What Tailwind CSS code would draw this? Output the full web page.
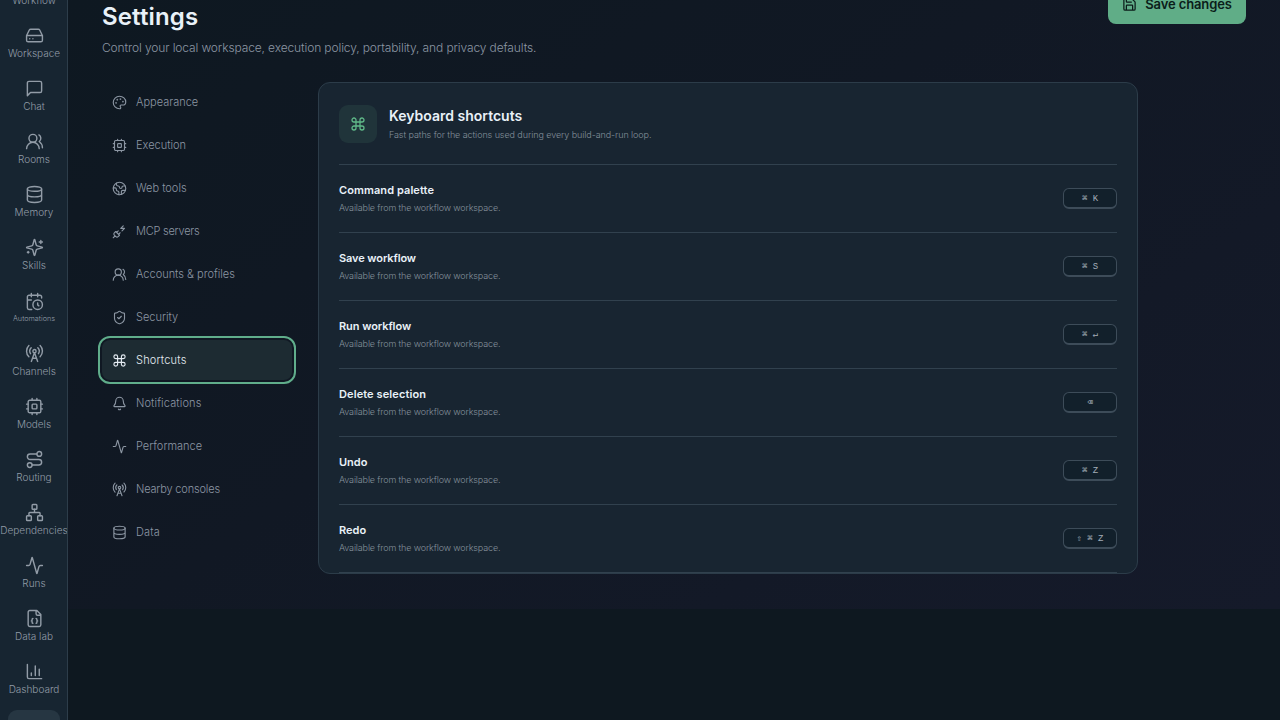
<!DOCTYPE html>
<html lang="en">
<head>
<meta charset="utf-8">
<title>Settings</title>
<script src="https://cdn.jsdelivr.net/npm/@tailwindcss/browser@4"></script>
</head>
<body class="h-[720px] w-[1280px] overflow-hidden bg-[#0e1820] font-['Inter',sans-serif] font-light text-[#8c96a3]">
<svg class="hidden" xmlns="http://www.w3.org/2000/svg">
<symbol id="drive" viewBox="0 0 24 24"><path d="M22 12H2M5.45 5.11 2 12v6a2 2 0 0 0 2 2h16a2 2 0 0 0 2-2v-6l-3.45-6.89A2 2 0 0 0 16.76 4H7.24a2 2 0 0 0-1.79 1.11zM6 16h.01M10 16h.01"/></symbol>
<symbol id="chat" viewBox="0 0 24 24"><path d="M21 15a2 2 0 0 1-2 2H7l-4 4V5a2 2 0 0 1 2-2h14a2 2 0 0 1 2 2z"/></symbol>
<symbol id="users" viewBox="0 0 24 24"><path d="M18 21a8 8 0 0 0-16 0"/><circle cx="10" cy="8" r="5"/><path d="M22 20c0-3.37-2-6.5-4-8a5 5 0 0 0-.45-8.3"/></symbol>
<symbol id="database" viewBox="0 0 24 24"><ellipse cx="12" cy="5" rx="9" ry="3"/><path d="M3 5V19A9 3 0 0 0 21 19V5M3 12A9 3 0 0 0 21 12"/></symbol>
<symbol id="sparkles" viewBox="0 0 24 24"><path d="M9.937 15.5A2 2 0 0 0 8.5 14.063l-6.135-1.582a.5.5 0 0 1 0-.962L8.5 9.936A2 2 0 0 0 9.937 8.5l1.582-6.135a.5.5 0 0 1 .963 0L14.063 8.5A2 2 0 0 0 15.5 9.937l6.135 1.581a.5.5 0 0 1 0 .964L15.5 14.063a2 2 0 0 0-1.437 1.437l-1.582 6.135a.5.5 0 0 1-.963 0zM20 3v4M22 5h-4M4 17v2M5 18H3"/></symbol>
<symbol id="calendar" viewBox="0 0 24 24"><path d="M21 7.5V6a2 2 0 0 0-2-2H5a2 2 0 0 0-2 2v14a2 2 0 0 0 2 2h3.5M16 2v4M8 2v4M3 10h5M17.5 17.5 16 16.3V14"/><circle cx="16" cy="16" r="6"/></symbol>
<symbol id="tower" viewBox="0 0 24 24"><path d="M4.9 16.1C1 12.2 1 5.8 4.9 1.9M7.8 4.7a6.14 6.14 0 0 0-.8 7.5"/><circle cx="12" cy="9" r="2"/><path d="M16.2 4.8c2 2 2.26 5.11.8 7.47M19.1 1.9a9.96 9.96 0 0 1 0 14.1M9.5 18h5M8 22l4-11 4 11"/></symbol>
<symbol id="cpu" viewBox="0 0 24 24"><rect x="4" y="4" width="16" height="16" rx="2"/><rect x="9" y="9" width="6" height="6" rx="1"/><path d="M15 2v2M15 20v2M2 15h2M2 9h2M20 15h2M20 9h2M9 2v2M9 20v2"/></symbol>
<symbol id="route" viewBox="0 0 24 24"><circle cx="6" cy="19" r="3"/><path d="M9 19h8.5a3.5 3.5 0 0 0 0-7h-11a3.5 3.5 0 0 1 0-7H15"/><circle cx="18" cy="5" r="3"/></symbol>
<symbol id="network" viewBox="0 0 24 24"><rect x="16" y="16" width="6" height="6" rx="1"/><rect x="2" y="16" width="6" height="6" rx="1"/><rect x="9" y="2" width="6" height="6" rx="1"/><path d="M5 16v-3a1 1 0 0 1 1-1h12a1 1 0 0 1 1 1v3M12 12V8"/></symbol>
<symbol id="activity" viewBox="0 0 24 24"><path d="M22 12h-2.48a2 2 0 0 0-1.93 1.46l-2.35 8.36a.25.25 0 0 1-.48 0L9.24 2.18a.25.25 0 0 0-.48 0l-2.35 8.36A2 2 0 0 1 4.49 12H2"/></symbol>
<symbol id="json" viewBox="0 0 24 24"><path d="M15 2H6a2 2 0 0 0-2 2v16a2 2 0 0 0 2 2h12a2 2 0 0 0 2-2V7ZM14 2v4a2 2 0 0 0 2 2h4M10 12a1 1 0 0 0-1 1v1a1 1 0 0 1-1 1 1 1 0 0 1 1 1v1a1 1 0 0 0 1 1M14 18a1 1 0 0 0 1-1v-1a1 1 0 0 1 1-1 1 1 0 0 1-1-1v-1a1 1 0 0 0-1-1"/></symbol>
<symbol id="chart" viewBox="0 0 24 24"><path d="M3 3v16a2 2 0 0 0 2 2h16M18 17V9M13 17V5M8 17v-3"/></symbol>
<symbol id="palette" viewBox="0 0 24 24"><path d="M12 22a1 1 0 0 1 0-20 10 9 0 0 1 10 9 5 5 0 0 1-5 5h-2.25a1.75 1.75 0 0 0-1.4 2.8l.3.4a1.75 1.75 0 0 1-1.4 2.8z"/><g fill="currentColor"><circle cx="13.5" cy="6.5" r=".5"/><circle cx="17.5" cy="10.5" r=".5"/><circle cx="6.5" cy="12.5" r=".5"/><circle cx="8.5" cy="7.5" r=".5"/></g></symbol>
<symbol id="earth" viewBox="0 0 24 24"><path d="M21.54 15H17a2 2 0 0 0-2 2v4.54M7 3.34V5a3 3 0 0 0 3 3 2 2 0 0 1 2 2c0 1.1.9 2 2 2a2 2 0 0 0 2-2c0-1.1.9-2 2-2h3.17M11 21.95V18a2 2 0 0 0-2-2 2 2 0 0 1-2-2v-1a2 2 0 0 0-2-2H2.05"/><circle cx="12" cy="12" r="10"/></symbol>
<symbol id="plug" viewBox="0 0 24 24"><path d="M6.3 20.3a2.4 2.4 0 0 0 3.4 0L12 18l-6-6-2.3 2.3a2.4 2.4 0 0 0 0 3.4ZM2 22l3-3M7.5 13.5 10 11M10.5 16.5 13 14M18 3l-4 4h6l-4 4"/></symbol>
<symbol id="shield" viewBox="0 0 24 24"><path d="M20 13c0 5-3.5 7.5-7.66 8.95a1 1 0 0 1-.67-.01C7.5 20.5 4 18 4 13V6a1 1 0 0 1 1-1c2 0 4.5-1.2 6.24-2.72a1.17 1.17 0 0 1 1.52 0C14.51 3.81 17 5 19 5a1 1 0 0 1 1 1zM9 12l2 2 4-4"/></symbol>
<symbol id="command" viewBox="0 0 24 24"><path d="M15 6v12a3 3 0 1 0 3-3H6a3 3 0 1 0 3 3V6a3 3 0 1 0-3 3h12a3 3 0 1 0-3-3"/></symbol>
<symbol id="bell" viewBox="0 0 24 24"><path d="M10.268 21a2 2 0 0 0 3.464 0M3.262 15.326A1 1 0 0 0 4 17h16a1 1 0 0 0 .74-1.673C19.41 13.956 18 12.499 18 8A6 6 0 0 0 6 8c0 4.499-1.411 5.956-2.738 7.326"/></symbol>
<symbol id="save" viewBox="0 0 24 24"><path d="M15.2 3a2 2 0 0 1 1.4.6l3.8 3.8a2 2 0 0 1 .6 1.4V19a2 2 0 0 1-2 2H5a2 2 0 0 1-2-2V5a2 2 0 0 1 2-2zM17 21v-7a1 1 0 0 0-1-1H8a1 1 0 0 0-1 1v7M7 3v4a1 1 0 0 0 1 1h7"/></symbol>
</svg>
<div class="flex h-full">
  <aside class="flex w-[68px] shrink-0 flex-col overflow-hidden border-r border-[#2d3d4a] bg-[#172531] text-[10px] leading-[14px] text-[#929ca7] [&_a]:flex [&_a]:h-[50px] [&_a]:w-[68px] [&_a]:shrink-0 [&_a]:flex-col [&_a]:items-center [&_a]:pt-[5px] [&_a]:whitespace-nowrap [&_svg]:mb-[0.5px] [&_svg]:size-[19px] [&_svg]:shrink-0 [&_svg]:fill-none [&_svg]:stroke-current [&_svg]:stroke-[1.8] [&_svg]:[stroke-linecap:round] [&_svg]:[stroke-linejoin:round]">
    <nav class="-mt-[32px] flex flex-col gap-[3px]">
      <a><svg><use href="#network"/></svg>Workflow</a>
      <a><svg><use href="#drive"/></svg>Workspace</a>
      <a><svg><use href="#chat"/></svg>Chat</a>
      <a><svg><use href="#users"/></svg>Rooms</a>
      <a><svg><use href="#database"/></svg>Memory</a>
      <a><svg><use href="#sparkles"/></svg>Skills</a>
      <a class="text-[7.25px]"><svg class="mt-px"><use href="#calendar"/></svg>Automations</a>
      <a><svg><use href="#tower"/></svg>Channels</a>
      <a><svg><use href="#cpu"/></svg>Models</a>
      <a><svg><use href="#route"/></svg>Routing</a>
      <a><svg><use href="#network"/></svg>Dependencies</a>
      <a><svg><use href="#activity"/></svg>Runs</a>
      <a><svg><use href="#json"/></svg>Data lab</a>
      <a><svg><use href="#chart"/></svg>Dashboard</a>
      <div class="ml-2 h-[50px] w-[52px] rounded-[9px] bg-[#263642]"></div>
    </nav>
  </aside>
  <main class="h-[609px] flex-1 bg-linear-[145deg,#0e1821_0%,#111824_45%,#151a2a_100%] pr-[34px] pl-[34px]">
    <header class="flex h-[82px] items-start justify-between">
      <div>
        <h1 class="mt-px text-[24px] leading-8 font-semibold tracking-[0.15px] text-[#e9f1f8]">Settings</h1>
        <p class="mt-[6px] text-[12px] leading-[18px] tracking-[-0.12px]">Control your local workspace, execution policy, portability, and privacy defaults.</p>
      </div>
      <button class="-mt-[15px] flex h-[39px] w-[138px] items-center justify-center gap-2 rounded-lg bg-[#60ad87] text-[13px] font-semibold tracking-[-0.12px] whitespace-nowrap text-[#0b1d1a]"><svg class="size-[15px] fill-none stroke-current stroke-[2] [stroke-linecap:round] [stroke-linejoin:round]"><use href="#save"/></svg>Save changes</button>
    </header>
    <div class="flex items-start gap-[26px]">
      <nav class="flex w-[190px] shrink-0 flex-col gap-[3px] text-[11px] [&_a]:flex [&_a]:h-10 [&_a]:items-center [&_a]:gap-[9px] [&_a]:rounded-lg [&_a]:px-[10px] [&_svg]:size-[15px] [&_svg]:fill-none [&_svg]:stroke-current [&_svg]:stroke-[1.8] [&_svg]:[stroke-linecap:round] [&_svg]:[stroke-linejoin:round]">
        <a><svg><use href="#palette"/></svg>Appearance</a>
        <a><svg><use href="#cpu"/></svg>Execution</a>
        <a><svg><use href="#earth"/></svg>Web tools</a>
        <a class="tracking-[-0.23px]"><svg><use href="#plug"/></svg>MCP servers</a>
        <a><svg><use href="#users"/></svg>Accounts &amp; profiles</a>
        <a><svg><use href="#shield"/></svg>Security</a>
        <a class="bg-[#1d2b32] tracking-[0.2px] text-[#e6edf4] outline-2 outline-offset-2 outline-[#60ad8b]"><svg><use href="#command"/></svg>Shortcuts</a>
        <a class="tracking-[0.12px]"><svg><use href="#bell"/></svg>Notifications</a>
        <a><svg><use href="#activity"/></svg>Performance</a>
        <a class="tracking-[-0.17px]"><svg><use href="#tower"/></svg>Nearby consoles</a>
        <a class="tracking-[0.15px]"><svg><use href="#database"/></svg>Data</a>
      </nav>
      <section class="h-[492px] w-[820px] rounded-xl border border-[#2c3c49] bg-[#182531] px-5 [&_h3]:text-[11px] [&_h3]:leading-[18px] [&_h3]:font-semibold [&_h3]:text-[#e9f1f8] [&_p]:text-[9px] [&_p]:leading-[18px] [&_p]:text-[#84909b] [&_li]:flex [&_li]:h-[68px] [&_li]:items-center [&_li]:justify-between [&_li]:border-b [&_li]:border-[#31414e] [&_li_p]:tracking-[-0.14px] [&_kbd]:flex [&_kbd]:h-[21px] [&_kbd]:w-[54px] [&_kbd]:items-center [&_kbd]:justify-center [&_kbd]:rounded-[6px] [&_kbd]:border [&_kbd]:border-b-2 [&_kbd]:border-[#3d4c59] [&_kbd]:bg-[#12202b] [&_kbd]:pt-[4px] [&_kbd]:font-['Liberation_Mono','DejaVu_Sans_Mono',monospace] [&_kbd]:text-[9px] [&_kbd]:font-normal [&_kbd]:whitespace-pre [&_kbd]:text-[#a3adb8]">
        <div class="flex h-[82px] items-center gap-3 border-b border-[#31414e]">
          <div class="flex size-[38px] items-center justify-center rounded-[9px] bg-[#20343a] text-[#60ba89]"><svg class="size-4 fill-none stroke-current stroke-[1.9] [stroke-linecap:round] [stroke-linejoin:round]"><use href="#command"/></svg></div>
          <div class="pt-[3px]">
            <h2 class="text-[14px] leading-[20px] font-semibold text-[#e9f1f8]">Keyboard shortcuts</h2>
            <p class="tracking-[-0.08px]">Fast paths for the actions used during every build-and-run loop.</p>
          </div>
        </div>
        <ul>
          <li><div><h3 class="tracking-[0.08px]">Command palette</h3><p>Available from the workflow workspace.</p></div><kbd>⌘ K</kbd></li>
          <li><div><h3 class="tracking-[-0.1px]">Save workflow</h3><p>Available from the workflow workspace.</p></div><kbd>⌘ S</kbd></li>
          <li><div><h3 class="tracking-[-0.07px]">Run workflow</h3><p>Available from the workflow workspace.</p></div><kbd>⌘ ↵</kbd></li>
          <li><div><h3 class="tracking-[0.1px]">Delete selection</h3><p>Available from the workflow workspace.</p></div><kbd>⌫</kbd></li>
          <li><div><h3>Undo</h3><p>Available from the workflow workspace.</p></div><kbd>⌘ Z</kbd></li>
          <li><div><h3>Redo</h3><p>Available from the workflow workspace.</p></div><kbd>⇧ ⌘ Z</kbd></li>
        </ul>
      </section>
    </div>
  </main>
</div>
</body>
</html>
